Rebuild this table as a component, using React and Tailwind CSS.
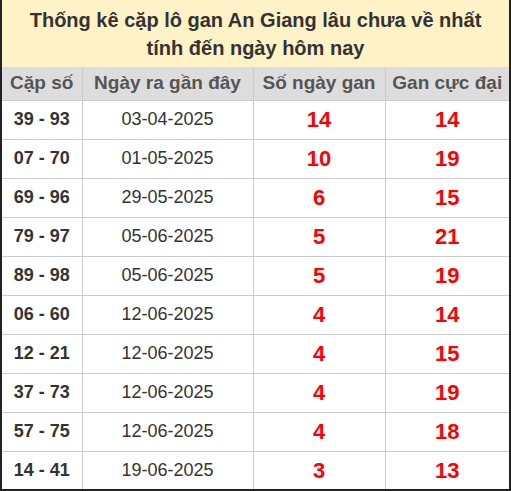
const rows = [
  ["39 - 93", "03-04-2025", 14, 14],
  ["07 - 70", "01-05-2025", 10, 19],
  ["69 - 96", "29-05-2025", 6, 15],
  ["79 - 97", "05-06-2025", 5, 21],
  ["89 - 98", "05-06-2025", 5, 19],
  ["06 - 60", "12-06-2025", 4, 14],
  ["12 - 21", "12-06-2025", 4, 15],
  ["37 - 73", "12-06-2025", 4, 19],
  ["57 - 75", "12-06-2025", 4, 18],
  ["14 - 41", "19-06-2025", 3, 13],
];

export default function App() {
  const cell = "border border-[#cccccc] text-center";
  return (
    <div className="w-[511px] h-[491px] bg-white font-['Liberation_Sans',Arial,sans-serif]">
      <div className="border-x-2 border-b-2 border-[#222]">
        <div className="h-[67px] bg-[#fff2c6] flex flex-col items-center justify-center text-[20px] font-bold leading-[28px] text-[#333]">
          <div>Thống kê cặp lô gan An Giang lâu chưa về nhất</div>
          <div>tính đến ngày hôm nay</div>
        </div>
        <table className="w-full table-fixed border-collapse">
          <colgroup>
            <col className="w-[80px]" />
            <col className="w-[171px]" />
            <col className="w-[132px]" />
            <col />
          </colgroup>
          <thead>
            <tr className="h-[33px] bg-[#dddddd] text-[19px] font-bold text-[#555]">
              <th className={cell + " border-l-0 border-t-0"}>Cặp số</th>
              <th className={cell + " border-t-0"}>Ngày ra gần đây</th>
              <th className={cell + " border-t-0"}>Số ngày gan</th>
              <th className={cell + " border-r-0 border-t-0"}>Gan cực đại</th>
            </tr>
          </thead>
          <tbody>
            {rows.map((r, i) => {
              const last = i === rows.length - 1 ? " border-b-0" : "";
              return (
                <tr key={i} className={i === rows.length - 1 ? "h-[38px]" : "h-[39px]"}>
                  <td className={cell + " border-l-0 text-[18px] font-bold text-[#333]" + last}>{r[0]}</td>
                  <td className={cell + " text-[18px] text-[#333]" + last}>{r[1]}</td>
                  <td className={cell + " text-[22px] font-bold text-[#ff0000]" + last}>{r[2]}</td>
                  <td className={cell + " border-r-0 text-[22px] font-bold text-[#ff0000]" + last}>{r[3]}</td>
                </tr>
              );
            })}
          </tbody>
        </table>
      </div>
    </div>
  );
}
